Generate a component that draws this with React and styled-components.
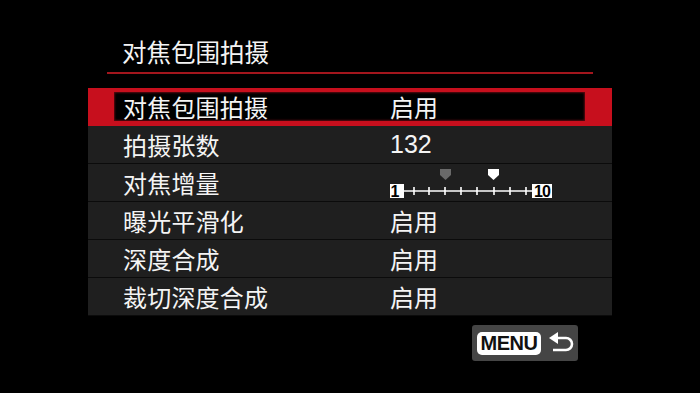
import React from 'react'
import styled, { createGlobalStyle } from 'styled-components'

const GlobalStyle = createGlobalStyle`
	html, body {
		margin: 0;
		padding: 0;
		background: #000;
	}
	body {
		font-family: "Noto Sans CJK SC", "Liberation Sans", sans-serif;
	}
`

const rows = [
	{ label: '对焦包围拍摄', value: '启用', active: true },
	{ label: '拍摄张数', value: '132', number: true },
	{ label: '对焦增量', slider: true },
	{ label: '曝光平滑化', value: '启用' },
	{ label: '深度合成', value: '启用' },
	{ label: '裁切深度合成', value: '启用' },
]

const ticks = [24, 39, 55, 71, 87, 104, 120, 136]

const Slider = () => (
	<svg width='164' height='34' viewBox='0 0 164 34'>
		<path d='M50 3 h11 v6 l-5.5 5 l-5.5 -5 z' fill='#6a6a6a' />
		<path d='M98 3 h11 v6 l-5.5 5 l-5.5 -5 z' fill='#fff' />
		<line x1='14' y1='25' x2='142' y2='25' stroke='#fff' strokeWidth='1.6' />
		{ticks.map((x) => (
			<line key={x} x1={x} y1='21' x2={x} y2='29' stroke='#fff' strokeWidth='1.6' />
		))}
		<rect x='0' y='18' width='14' height='14' fill='#fff' />
		<text x='5' y='30.5' textAnchor='middle' fontSize='16' fontWeight='bold' fontFamily='Liberation Sans Narrow, Liberation Sans, sans-serif' fill='#000'>1</text>
		<rect x='142' y='18' width='20' height='14' fill='#fff' />
		<text x='152' y='30.5' textAnchor='middle' fontSize='16' fontWeight='bold' fontFamily='Liberation Sans Narrow, Liberation Sans, sans-serif' fill='#000' letterSpacing='-1'>10</text>
	</svg>
)

const App = () => {
	return (
		<Screen>
			<GlobalStyle />
			<Header>
				<Title>对焦包围拍摄</Title>
			</Header>
			<List>
				{rows.map((row) => (
					<Row key={row.label} $active={row.active}>
						<RowInner $active={row.active}>
							<Label>{row.label}</Label>
							<Value $number={row.number}>
								{row.slider ? <Slider /> : row.value}
							</Value>
						</RowInner>
					</Row>
				))}
			</List>
			<Footer>
				<MenuButton>
					<MenuTag>MENU</MenuTag>
					<svg width='28' height='22' viewBox='0 0 28 22'>
						<path
							d='M10 6 H19 a6 6 0 0 1 0 12 H6'
							fill='none'
							stroke='#fff'
							strokeWidth='2.6'
						/>
						<path d='M2 6 L11 0 V12 Z' fill='#fff' />
					</svg>
				</MenuButton>
			</Footer>
		</Screen>
	)
}

export default App

const Screen = styled.div`
	width: 700px;
	height: 393px;
	background: #000;
	overflow: hidden;
	padding-top: 36px;
	box-sizing: border-box;
`

const Header = styled.div`
	margin-left: 107px;
	width: 486px;
	border-bottom: 2px solid #a3161d;
	height: 38px;
	box-sizing: border-box;
`

const Title = styled.div`
	padding-left: 15px;
	color: #f4f4f4;
	font-size: 24.5px;
	line-height: 32px;
`

const List = styled.div`
	margin-left: 88px;
	width: 524px;
	margin-top: 14px;
	display: flex;
	flex-direction: column;
`

const Row = styled.div`
	height: 38px;
	box-sizing: border-box;
	background: ${(p) => (p.$active ? '#c70f1d' : '#1f1f1f')};
	border-bottom: ${(p) => (p.$active ? 'none' : '1.5px solid #0b0b0b')};
	padding: ${(p) => (p.$active ? '4px 27px 5px 26px' : '0')};
`

const RowInner = styled.div`
	height: 100%;
	display: flex;
	align-items: center;
	background: ${(p) => (p.$active ? '#000' : 'transparent')};
	box-shadow: ${(p) => (p.$active ? 'inset 0 0 2px 1px #5a0a10' : 'none')};
	padding-left: ${(p) => (p.$active ? '9px' : '35px')};
`

const Label = styled.div`
	width: 267px;
	color: #f4f4f4;
	font-size: 24px;
	line-height: 1;
	letter-spacing: 0.2px;
`

const Value = styled.div`
	color: #f4f4f4;
	font-size: ${(p) => (p.$number ? '25px' : '24px')};
	font-family: ${(p) =>
		p.$number
			? '"Liberation Sans", sans-serif'
			: '"Noto Sans CJK SC", sans-serif'};
	line-height: 1;
	display: flex;
	align-items: center;
`

const Footer = styled.div`
	display: flex;
	justify-content: flex-end;
	padding-right: 122px;
	margin-top: 9px;
`

const MenuButton = styled.div`
	width: 106px;
	height: 36px;
	box-sizing: border-box;
	background: #454545;
	border-radius: 3px;
	display: flex;
	align-items: center;
	gap: 6px;
	padding-left: 5px;
`

const MenuTag = styled.div`
	background: #fff;
	color: #111;
	border-radius: 5px;
	height: 23px;
	width: 64px;
	display: flex;
	align-items: center;
	justify-content: center;
	font-family: "Liberation Sans", sans-serif;
	font-weight: bold;
	font-size: 20px;
	letter-spacing: -0.5px;
`
